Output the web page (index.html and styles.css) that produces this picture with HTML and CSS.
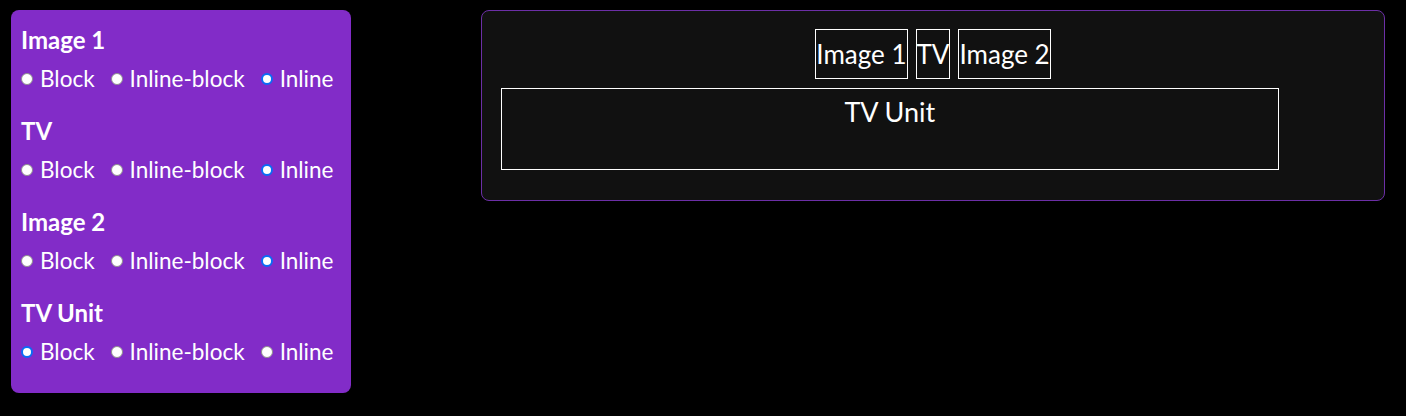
FILE: index.html
```html
<!DOCTYPE html>
<html lang="en">
<head>
<meta charset="utf-8">
<title>Display modes</title>
<link rel="stylesheet" href="styles.css">
</head>
<body>
<div class="page">
  <form class="controls">
    <div class="group">
      <h3 class="group-title">Image 1</h3>
      <div class="options">
        <label class="opt"><input type="radio" name="img1"><span>Block</span></label>
        <label class="opt"><input type="radio" name="img1"><span>Inline-block</span></label>
        <label class="opt"><input type="radio" name="img1" checked><span>Inline</span></label>
      </div>
    </div>
    <div class="group">
      <h3 class="group-title">TV</h3>
      <div class="options">
        <label class="opt"><input type="radio" name="tv"><span>Block</span></label>
        <label class="opt"><input type="radio" name="tv"><span>Inline-block</span></label>
        <label class="opt"><input type="radio" name="tv" checked><span>Inline</span></label>
      </div>
    </div>
    <div class="group">
      <h3 class="group-title">Image 2</h3>
      <div class="options">
        <label class="opt"><input type="radio" name="img2"><span>Block</span></label>
        <label class="opt"><input type="radio" name="img2"><span>Inline-block</span></label>
        <label class="opt"><input type="radio" name="img2" checked><span>Inline</span></label>
      </div>
    </div>
    <div class="group">
      <h3 class="group-title">TV Unit</h3>
      <div class="options">
        <label class="opt"><input type="radio" name="unit" checked><span>Block</span></label>
        <label class="opt"><input type="radio" name="unit"><span>Inline-block</span></label>
        <label class="opt"><input type="radio" name="unit"><span>Inline</span></label>
      </div>
    </div>
  </form>
  <div class="stage">
    <div class="items">
      <span class="item">Image 1</span>
      <span class="item">TV</span>
      <span class="item">Image 2</span>
    </div>
    <div class="unit">TV Unit</div>
  </div>
</div>
</body>
</html>
```
FILE: styles.css
```css
html, body {
  margin: 0;
  padding: 0;
  background: #000;
}
body {
  font-family: Lato, "Noto Sans", sans-serif;
  color: #fff;
}
.page {
  display: flex;
  align-items: flex-start;
  padding: 10px 21px 0 11px;
  gap: 130px;
}
.controls {
  width: 340px;
  flex: none;
  box-sizing: border-box;
  background: #822cc8;
  border-radius: 8px;
  padding: 15px 10px 26px 10px;
  margin: 0;
}
.group + .group {
  margin-top: 22px;
}
.group-title {
  margin: 0;
  font-size: 24px;
  font-weight: 700;
  line-height: 30px;
}
.options {
  display: flex;
  gap: 16px;
  margin-top: 9px;
  line-height: 30px;
  font-size: 22.5px;
}
.opt {
  display: flex;
  align-items: center;
  gap: 7px;
}
.opt input {
  appearance: none;
  -webkit-appearance: none;
  margin: 0;
  width: 12px;
  height: 12px;
  border-radius: 50%;
  background: #fff;
  border: 1px solid #8f8f8f;
  box-sizing: border-box;
}
.opt input:checked {
  border: 2px solid #0a6cf5;
  background: #fff;
}
.stage {
  flex: 1;
  box-sizing: border-box;
  background: #111;
  border: 1px solid #6c2fa6;
  border-radius: 8px;
  padding: 18px 19px 30px 19px;
}
.items {
  display: flex;
  justify-content: center;
  gap: 8px;
}
.item {
  border: 1px solid #fff;
  font-size: 26px;
  line-height: 48px;
}
.unit {
  width: 90%;
  box-sizing: border-box;
  height: 82px;
  margin-top: 9px;
  border: 1px solid #fff;
  text-align: center;
  font-size: 27px;
  line-height: 46px;
}
```
